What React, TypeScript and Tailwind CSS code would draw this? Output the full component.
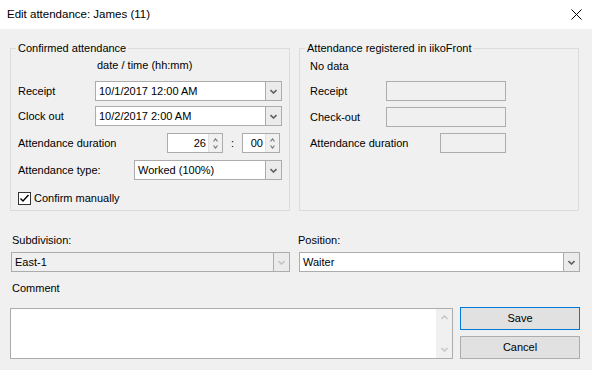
import React from 'react';

const Chevron: React.FC<{ up?: boolean; color?: string; w?: number }> = ({ up, color = '#606060', w = 7 }) => (
  <svg width={w} height={w === 7 ? 5 : 4} viewBox={w === 7 ? '0 0 7 5' : '0 0 5 4'}>
    {w === 7 ? (
      <path d={up ? 'M0.5 4 L3.5 1 L6.5 4' : 'M0.5 1 L3.5 4 L6.5 1'} stroke={color} strokeWidth="1.6" fill="none" />
    ) : (
      <path d={up ? 'M0.5 3.5 L2.5 1 L4.5 3.5' : 'M0.5 0.5 L2.5 3 L4.5 0.5'} stroke={color} strokeWidth="1.1" fill="none" />
    )}
  </svg>
);

const Combo: React.FC<{ value: string; width: string; disabled?: boolean }> = ({ value, width, disabled }) => (
  <div
    className={`${width} h-[20px] flex border border-[#acacac] ${disabled ? 'bg-[#f0f0f0]' : 'bg-white'}`}
  >
    <div className="flex-1 pl-[3px] leading-[18px] truncate">{value}</div>
    <div className="w-[16px] border-l border-[#acacac] bg-[#ebebeb] flex items-center justify-center">
      <Chevron color={disabled ? '#c4c4c4' : '#606060'} />
    </div>
  </div>
);

const Spin: React.FC<{ value: string; width: string }> = ({ value, width }) => (
  <div className={`${width} h-[20px] flex border border-[#acacac] bg-white`}>
    <div className="flex-1 text-right pr-[2px] leading-[18px]">{value}</div>
    <div className="w-[14px] bg-[#f0f0f0] border-l border-[#e0e0e0] flex flex-col items-center justify-center gap-[3px]">
      <Chevron up w={5} color="#707070" />
      <Chevron w={5} color="#707070" />
    </div>
  </div>
);

const EmptyBox: React.FC<{ width: string }> = ({ width }) => (
  <div className={`${width} h-[20px] border border-[#adadad] bg-[#f0f0f0]`} />
);

export default function App() {
  return (
    <div className="w-[592px] h-[370px] bg-[#f0f0f0] font-['Liberation_Sans',Arial,sans-serif] text-[11px] text-black overflow-hidden">
      <div className="h-[29px] bg-white flex items-center justify-between pl-[7px] pr-[10px]">
        <span className="text-[11.5px]">Edit attendance: James (11)</span>
        <svg width="11" height="11" viewBox="0 0 11 11">
          <path d="M0.5 0.5 L10.5 10.5 M10.5 0.5 L0.5 10.5" stroke="#000" strokeWidth="1" />
        </svg>
      </div>

      <div className="pl-[10px] pt-[12px]">
        <div className="flex gap-[9px]">
          <fieldset className="w-[280px] h-[170px] border border-[#dcdcdc] m-0 px-[7px] min-w-0">
            <legend className="ml-[-2px] px-[2px] leading-[14px]">Confirmed attendance</legend>
            <div className="mt-[3px] h-[14px] leading-[14px] pl-[79px]">date / time (hh:mm)</div>
            <div className="mt-[9px] h-[20px] flex items-center">
              <div className="w-[77px]">Receipt</div>
              <Combo value="10/1/2017 12:00 AM" width="w-[187px]" />
            </div>
            <div className="mt-[5px] h-[20px] flex items-center">
              <div className="w-[77px]">Clock out</div>
              <Combo value="10/2/2017 2:00 AM" width="w-[187px]" />
            </div>
            <div className="mt-[7px] h-[20px] flex items-center pr-[2px]">
              <div className="flex-1">Attendance duration</div>
              <Spin value="26" width="w-[56px]" />
              <div className="w-[19px] text-center">:</div>
              <Spin value="00" width="w-[38px]" />
            </div>
            <div className="mt-[7px] h-[20px] flex items-center">
              <div className="w-[116px]">Attendance type:</div>
              <Combo value="Worked (100%)" width="w-[148px]" />
            </div>
            <div className="mt-[12px] h-[13px] flex items-center gap-[3px]">
              <div className="w-[13px] h-[13px] border border-[#333] bg-white flex items-center justify-center">
                <svg width="11" height="11" viewBox="0 0 11 11">
                  <path d="M1.5 5.5 L4 8 L9.5 2" stroke="#000" strokeWidth="1.4" fill="none" />
                </svg>
              </div>
              <span className="leading-[13px]">Confirm manually</span>
            </div>
          </fieldset>

          <fieldset className="w-[280px] h-[170px] border border-[#dcdcdc] m-0 pl-[10px] pr-[7px] min-w-0">
            <legend className="ml-[-5px] px-[2px] leading-[14px]">Attendance registered in iikoFront</legend>
            <div className="mt-[4px] h-[14px] leading-[14px]">No data</div>
            <div className="mt-[8px] h-[20px] flex items-center">
              <div className="w-[76px]">Receipt</div>
              <EmptyBox width="w-[120px]" />
            </div>
            <div className="mt-[6px] h-[20px] flex items-center">
              <div className="w-[76px]">Check-out</div>
              <EmptyBox width="w-[120px]" />
            </div>
            <div className="mt-[6px] h-[20px] flex items-center">
              <div className="w-[130px]">Attendance duration</div>
              <EmptyBox width="w-[66px]" />
            </div>
          </fieldset>
        </div>

        <div className="mt-[22px] flex gap-[8px]">
          <div className="w-[280px]">
            <div className="h-[14px] leading-[14px] pl-[2px]">Subdivision:</div>
            <div className="mt-[5px] ml-[1px]">
              <Combo value="East-1" width="w-[279px]" disabled />
            </div>
          </div>
          <div className="w-[282px]">
            <div className="h-[14px] leading-[14px]">Position:</div>
            <div className="mt-[5px] ml-[1px]">
              <Combo value="Waiter" width="w-[281px]" />
            </div>
          </div>
        </div>

        <div className="mt-[9px] h-[14px] leading-[14px] pl-[2px]">Comment</div>

        <div className="mt-[13px] flex items-start">
          <div className="w-[443px] h-[51px] border border-[#acacac] bg-white flex justify-end">
            <div className="w-[16px] bg-[#f0f0f0] flex flex-col items-center justify-between py-[6px]">
              <Chevron up color="#c8c8c8" />
              <Chevron color="#c8c8c8" />
            </div>
          </div>
          <div className="ml-[7px] w-[120px] mt-[-1px] flex flex-col gap-[6px]">
            <div className="h-[23px] border border-[#0078d7] bg-[#e1e1e1] flex items-center justify-center">Save</div>
            <div className="h-[23px] border border-[#adadad] bg-[#e1e1e1] flex items-center justify-center">Cancel</div>
          </div>
        </div>
      </div>
    </div>
  );
}
